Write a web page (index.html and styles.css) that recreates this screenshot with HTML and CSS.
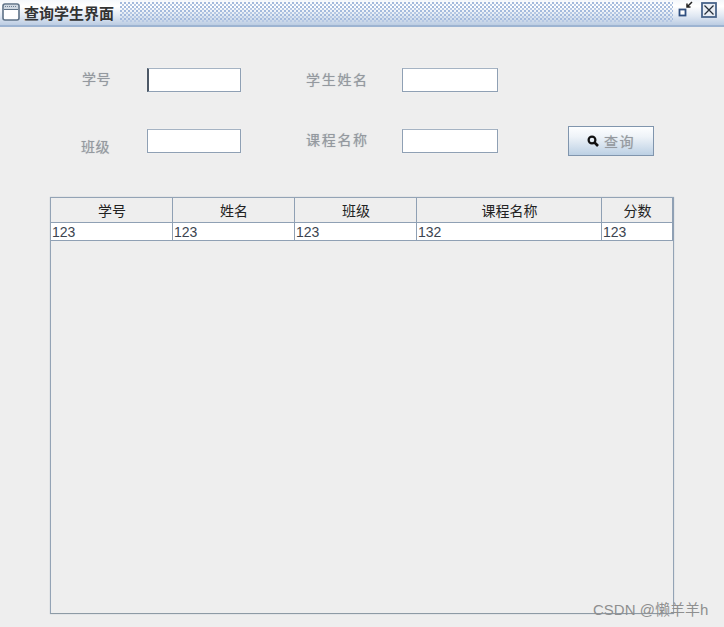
FILE: index.html
```html
<!DOCTYPE html>
<html lang="zh">
<head>
<meta charset="utf-8">
<title>查询学生界面</title>
<link rel="stylesheet" href="styles.css">
</head>
<body>
<div class="window">
  <header class="titlebar">
    <svg class="app-icon" width="18" height="18" viewBox="0 0 18 18"><rect x="1" y="1" width="16" height="16" rx="2" fill="#fff" stroke="#5d7186" stroke-width="1.6"/><rect x="2" y="2" width="14" height="4" fill="#cfd8e2"/><path d="M3 3.5h12" stroke="#6d7f92" stroke-dasharray="1 1"/><path d="M2 6.5h14" stroke="#5d7186"/></svg>
    <span class="title">查询学生界面</span>
    <div class="dither"></div>
    <div class="controls">
      <svg width="20" height="18" viewBox="0 0 20 18"><rect x="1.5" y="8.5" width="6" height="6" fill="#fff" stroke="#2f4f80" stroke-width="1.8"/><path d="M9 6l5-5M9 2.5V6h3.500" fill="none" stroke="#222" stroke-width="1.500"/></svg>
      <svg width="16" height="16" viewBox="0 0 16 16"><rect x="1" y="1" width="14" height="14" fill="#e9eef5" stroke="#47638a" stroke-width="1.8"/><path d="M3.5 3.5l9 9M12.500 3.500l-9 9" stroke="#26303c" stroke-width="1.300"/></svg>
    </div>
  </header>
  <main class="content">
    <section class="form">
      <div class="row row-one">
        <label class="label label-id">学号</label>
        <input class="field field-short caret" type="text">
        <label class="label label-name">学生姓名</label>
        <input class="field field-long" type="text">
      </div>
      <div class="row row-two">
        <label class="label label-class">班级</label>
        <input class="field field-short" type="text">
        <label class="label label-course">课程名称</label>
        <input class="field field-long" type="text">
        <button class="search" type="button">
          <svg width="12" height="12" viewBox="0 0 12 12"><circle cx="5" cy="5" r="3.400" fill="none" stroke="#111" stroke-width="2.200"/><path d="M7.500 7.500l3.500 3.500" stroke="#111" stroke-width="2.600"/></svg>
          <span>查询</span>
        </button>
      </div>
    </section>
    <section class="table-pane">
      <table class="grid">
        <colgroup><col class="c1"><col class="c2"><col class="c3"><col class="c4"><col class="c5"></colgroup>
        <thead><tr><th>学号</th><th>姓名</th><th>班级</th><th>课程名称</th><th>分数</th></tr></thead>
        <tbody><tr><td>123</td><td>123</td><td>123</td><td>132</td><td>123</td></tr></tbody>
      </table>
    </section>
  </main>
  <div class="watermark">CSDN @懒羊羊h</div>
</div>
</body>
</html>
```
FILE: styles.css
```css
* { box-sizing: border-box; }
html, body { margin: 0; padding: 0; }
body {
  width: 724px;
  height: 627px;
  overflow: hidden;
  background: #eeeeee;
  font-family: "Liberation Sans", "Noto Sans CJK SC", sans-serif;
}
.window { position: relative; width: 724px; height: 627px; }
.titlebar {
  display: flex;
  align-items: center;
  height: 27px;
  padding: 0 4px 1px 2px;
  background: linear-gradient(#f4f7fb 0%, #ffffff 25%, #dfe7f2 65%, #bccde3 100%);
  border-bottom: 2px solid #9db4d2;
}
.app-icon { flex: none; }
.title {
  margin-left: 4px;
  width: 96px;
  font-size: 15px;
  font-weight: 700;
  color: #333;
  white-space: nowrap;
}
.dither {
  width: 553px;
  height: 20px;
  margin-right: 5px;
  background-image:
    radial-gradient(circle at 1px 1px, #a3b9dc 0.8px, transparent 1.1px),
    radial-gradient(circle at 3px 3px, #b6c8e3 0.8px, transparent 1.1px);
  background-size: 4px 4px;
}
.controls {
  display: flex;
  align-items: center;
  gap: 3px;
  margin-top: -4px;
}
.content { padding: 41px 50px 0; }
.form { display: flex; flex-direction: column; }
.row { display: flex; }
.row-one { height: 24px; align-items: flex-start; }
.row-two { height: 30px; margin-top: 34px; align-items: flex-start; }
.label {
  display: block;
  font-size: 14px;
  line-height: 20px;
  color: #94999f;
  letter-spacing: 1.700px;
  white-space: nowrap;
  text-shadow: 0 0 1px #b4b8bd;
}
.label-id { margin-left: 32px; width: 65px; letter-spacing: 0.500px; margin-top: 1px; }
.label-name { margin-left: 65px; width: 96px; margin-top: 2px; }
.label-class { margin-left: 31px; width: 66px; letter-spacing: 0.500px; margin-top: 11px; }
.label-course { margin-left: 65px; width: 96px; margin-top: 4px; }
.field {
  display: block;
  height: 24px;
  padding: 0 2px;
  background: #fff;
  border: 1px solid #8fa0b4;
  border-top-color: #a5b3c3;
  box-shadow: 0 0 1px #f7f7f7;
  outline: none;
}
.field-short { width: 94px; }
.field-long { width: 96px; }
.row-two .field { margin-top: 3px; }
.caret { border-left: 2px solid #4d5866; }
.search {
  display: flex;
  align-items: center;
  justify-content: center;
  gap: 5px;
  width: 86px;
  height: 30px;
  margin-left: 70px;
  padding: 0;
  border: 1px solid #8095ad;
  background: linear-gradient(#fdfeff 0%, #eef3f8 35%, #bcd0e4 100%);
  color: #94999f;
  font-family: inherit;
  font-size: 14px;
  letter-spacing: 1.500px;
  text-shadow: 0 0 1px #b4b8bd;
}
.table-pane {
  width: 624px;
  height: 417px;
  margin-top: 41px;
  border: 1px solid #93a3b5;
  border-bottom-color: #8d9aa5;
  box-shadow: 0 0 1px #a9b5c2;
}
.grid {
  border-collapse: separate;
  border-spacing: 0;
  table-layout: fixed;
  width: 623px;
  font-size: 14px;
}
.c1 { width: 122px; }
.c2 { width: 122px; }
.c3 { width: 122px; }
.c4 { width: 185px; }
.c5 { width: 72px; }
.grid th {
  height: 25px;
  padding: 0 0 0 1px;
  font-weight: 400;
  color: #222;
  text-align: center;
  background: #eeeeee;
  border-right: 1px solid #8fa0b4;
  border-bottom: 1px solid #8fa0b4;
}
.grid td {
  height: 18px;
  padding: 0 0 0 1px;
  line-height: 16px;
  color: #3c4450;
  background: #fff;
  border-right: 1px solid #8fa0b4;
  border-bottom: 1px solid #8fa0b4;
  overflow: hidden;
}
.grid th:last-child, .grid td:last-child { border-right-width: 2px; }
.watermark {
  position: absolute;
  left: 593px;
  top: 601px;
  font-size: 15px;
  line-height: 18px;
  color: #8f8f8f;
  white-space: nowrap;
}
```
